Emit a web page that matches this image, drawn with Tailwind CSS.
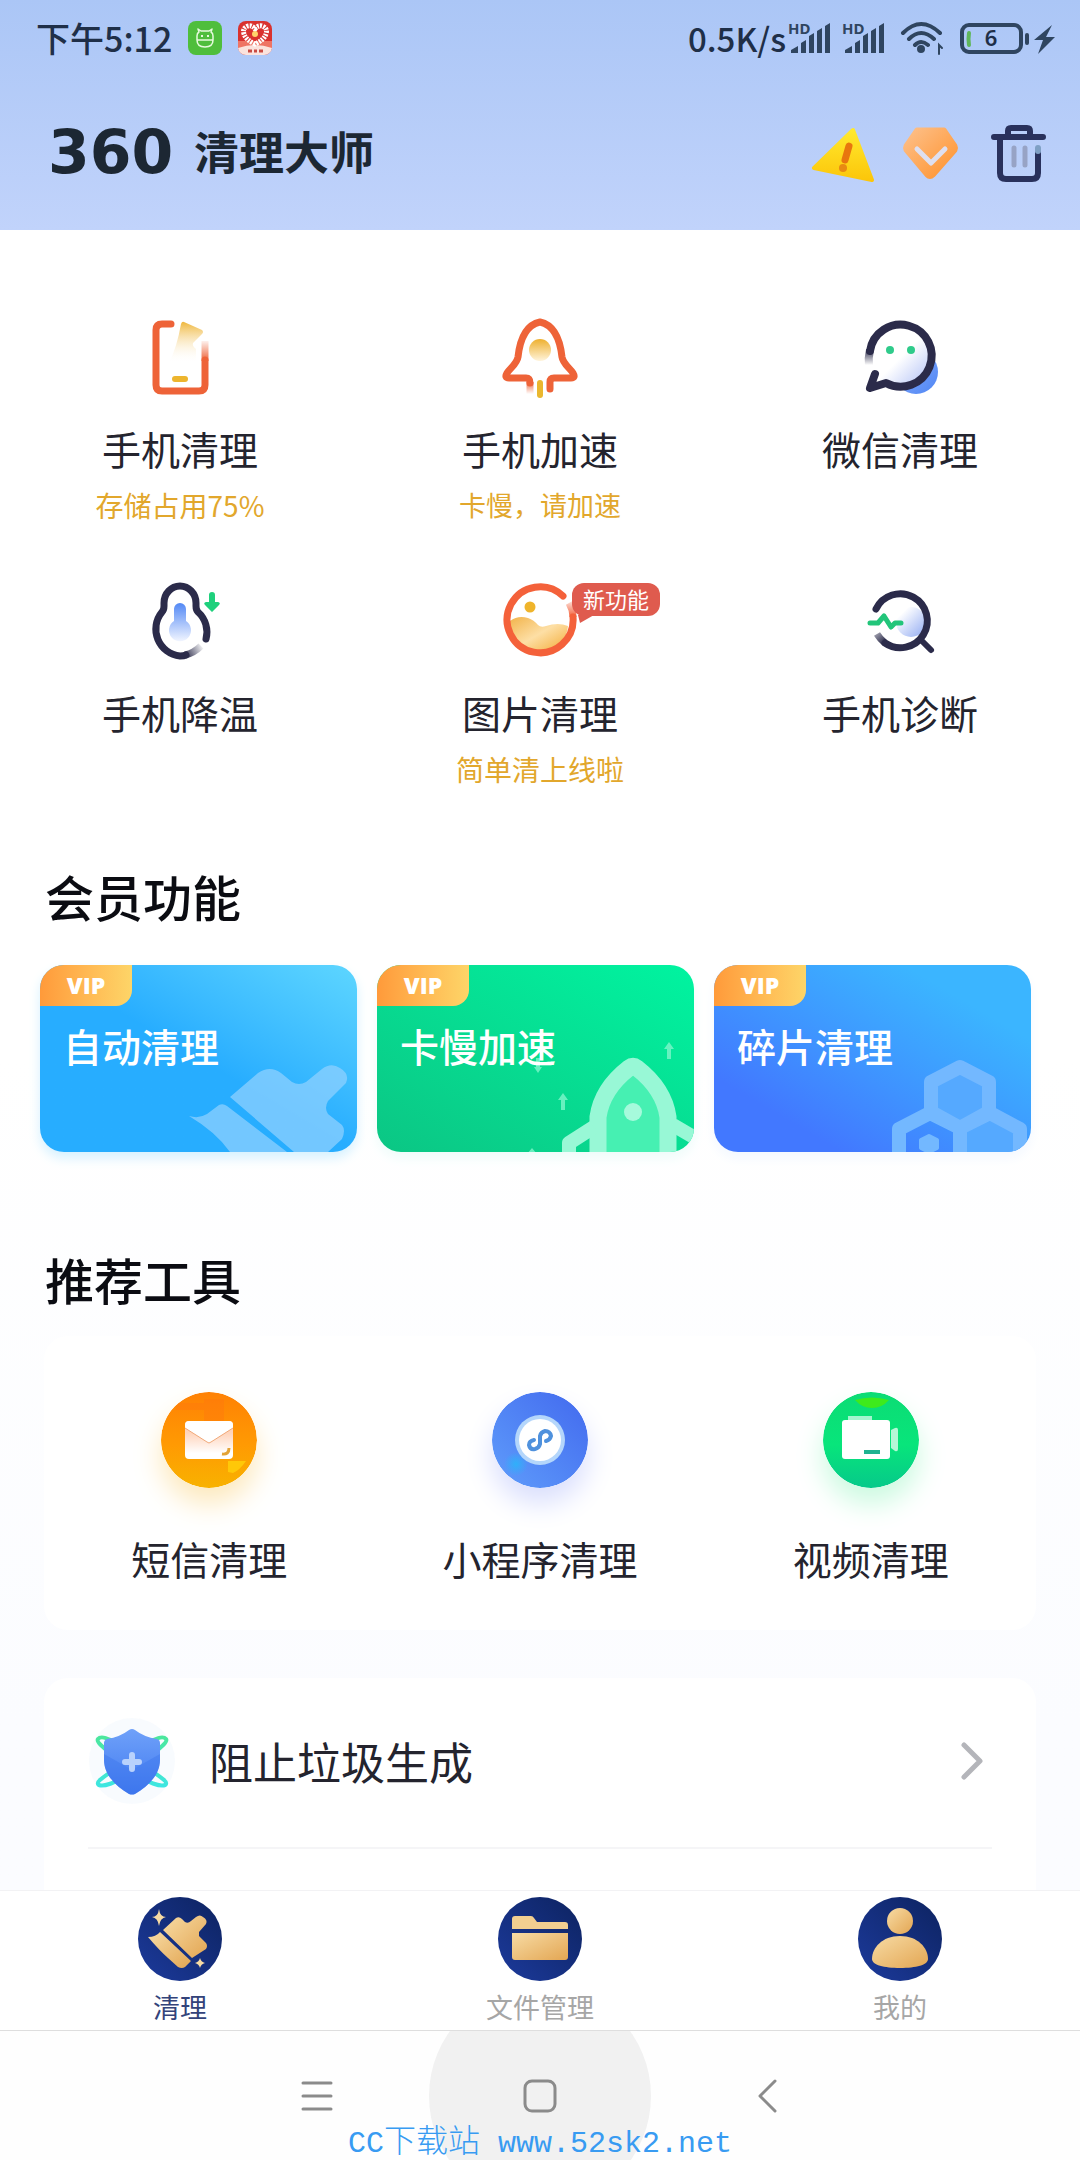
<!DOCTYPE html>
<html lang="zh-CN">
<head>
    <meta charset="UTF-8">
    <meta name="viewport" content="width=device-width, initial-scale=1.0">
    <title>360清理大师</title>
    <!-- TailwindCSS -->
    <script src="https://cdn.jsdelivr.net/npm/@tailwindcss/browser@4"></script>
</head>
<body class="flex h-screen flex-col overflow-hidden bg-white font-['Noto_Sans_CJK_SC',sans-serif] text-[#24242e]">

    <!-- 顶部区域 -->
    <header class="shrink-0 bg-linear-to-b from-[#abc6f6] to-[#c1d3fb]">
        <!-- 状态栏 -->
        <div class="flex h-[76px] items-center justify-between pr-6 pl-9 text-[#1f2f48]">
            <div class="flex items-center">
                <span class="text-[34px] leading-10 font-medium">下午5:12</span>
                <svg class="ml-4 size-[34px]" viewBox="0 0 34 34" fill="none">
                    <rect width="34" height="34" rx="8" fill="#4fbe3c"/>
                    <path d="M9 19v-4q0-3 2-4l-1-3 3 2h8l3-2-1 3q2 1 2 4v4q0 7-8 7t-8-7zm0 0h16" stroke="#e6fadd" stroke-width="1.5" stroke-linejoin="round"/>
                    <path d="M14 14v2M20 14v2" stroke="#e6fadd" stroke-width="2"/>
                </svg>
                <svg class="ml-4 size-[34px]" viewBox="0 0 34 34">
                    <rect width="34" height="34" rx="8" fill="#d9322f"/>
                    <path d="M0 20h34v7H0z" fill="#ee7464"/>
                    <path d="M0 27q17-6 34 0a8 8 0 0 1-8 7H8a8 8 0 0 1-8-7z" fill="#fbe3dd"/>
                    <path d="M17 8q3-4 7-3 6 2 4 8-2 6-11 10Q8 19 6 13 4 7 10 5q4-1 7 3z" fill="none" stroke="#fff" stroke-width="5" stroke-dasharray="2 1"/>
                    <circle cx="17" cy="13" r="3" fill="#ffd46b"/>
                    <path d="M10 30h4M16 30h3M21 30h4" stroke="#c94a42" stroke-width="3"/>
                </svg>
            </div>
            <div class="flex items-center">
                <span class="text-[33px] leading-10 font-medium">0.5K/s</span>
                <svg class="ml-1 h-8 w-[42px] overflow-visible" viewBox="0 0 42 32" fill="#2f4560">
                    <text x="-2" y="12" font-size="15" font-weight="700" font-family="Noto Sans">HD</text>
                    <path d="M1 31v-3l7-4v7zM11 31V21l5-3v13zM19 31V14l5-3v20zM27 31V9l5-3v25zM35 31V4l5-3v30z"/>
                </svg>
                <svg class="ml-3 h-8 w-[42px] overflow-visible" viewBox="0 0 42 32" fill="#2f4560">
                    <text x="-2" y="12" font-size="15" font-weight="700" font-family="Noto Sans">HD</text>
                    <path d="M1 31v-3l7-4v7zM11 31V21l5-3v13zM19 31V14l5-3v20zM27 31V9l5-3v25zM35 31V4l5-3v30z"/>
                </svg>
                <svg class="ml-3.5 h-[34px] w-11" viewBox="0 0 44 34" fill="none" stroke="#2f4560" stroke-width="4" stroke-linecap="round">
                    <path d="M3 12q18-18 37 0M9 18q12-12 25 0M15 24q6-6 13 0"/>
                    <circle cx="21" cy="28" r="2"/>
                    <path d="M39 33v-9l3 3" stroke-width="2"/>
                </svg>
                <svg class="ml-4 h-[34px] w-24" viewBox="0 0 96 34" fill="none">
                    <rect x="2" y="4" width="59" height="27" rx="7" stroke="#2f4560" stroke-width="4"/>
                    <path d="M9 12q-1 6 0 12" stroke="#5fb65a" stroke-width="4" stroke-linecap="round"/>
                    <path d="M67 14v8" stroke="#2f4560" stroke-width="4" stroke-linecap="round"/>
                    <path d="M92 4 74 19h9l-5 14 17-17h-9z" fill="#2f4560"/>
                    <text x="31" y="25" text-anchor="middle" font-size="22" font-weight="600" font-family="Noto Sans" fill="#1f2f48">6</text>
                </svg>
            </div>
        </div>

        <!-- 标题栏 -->
        <div class="flex h-[154px] items-start justify-between pt-11 pr-8 pl-12">
            <h1 class="flex h-16 items-center leading-none text-[#1c2733]">
                <span class="w-[146px] font-['DejaVu_Sans',sans-serif] text-[60px] font-bold">360</span>
                <span class="pb-1 text-[45px] font-bold">清理大师</span>
            </h1>
            <div class="flex h-16 items-center gap-6">
                <button type="button" aria-label="警告">
                    <svg class="h-[60px] w-[68px]" viewBox="0 0 68 60">
                        <defs>
                            <linearGradient id="warn" x1="0" y1="0" x2="0" y2="1"><stop stop-color="#ffe92e"/><stop offset="1" stop-color="#fcc60a"/></linearGradient>
                        </defs>
                        <path d="M45 8 6 46l58 12z" fill="url(#warn)" stroke="url(#warn)" stroke-width="4" stroke-linejoin="round"/>
                        <path d="m41 24-4 14" stroke="#e8760e" stroke-width="7" stroke-linecap="round"/>
                        <circle cx="35" cy="46" r="4" fill="#e88a12"/>
                    </svg>
                </button>
                <button type="button" aria-label="会员">
                    <svg class="h-[60px] w-[60px]" viewBox="0 0 60 60">
                        <defs>
                            <linearGradient id="gem" x1="0" y1="0" x2="1" y2="1"><stop stop-color="#fdc08a"/><stop offset="1" stop-color="#ff922c"/></linearGradient>
                        </defs>
                        <path d="M17 8h27l11 16q1 2 0 4L33 53q-3 3-6 0L6 28q-1-2 0-4z" fill="url(#gem)" stroke="url(#gem)" stroke-width="5" stroke-linejoin="round"/>
                        <path d="m17 27 14 14 14-14" fill="none" stroke="#dedff0" stroke-width="5" stroke-linecap="round" stroke-linejoin="round"/>
                    </svg>
                </button>
                <button type="button" aria-label="回收站" class="ml-1">
                    <svg class="h-[60px] w-[60px]" viewBox="0 0 60 60" fill="none" stroke="#29315c" stroke-width="6" stroke-linecap="round" stroke-linejoin="round">
                        <path d="M6 15h49M20 14V9q0-3 3-3h16q3 0 3 3v5M12 17v34q0 6 6 6h26q6 0 6-6V31"/>
                        <path d="M50 29v-3" stroke="#7fa0c4"/>
                        <path d="M26 26v17M37 26v17" stroke="#97a3c5" stroke-width="5"/>
                    </svg>
                </button>
            </div>
        </div>
    </header>

    <main class="min-h-0 flex-1 overflow-hidden bg-linear-to-b from-white from-50% to-[#fbfcff] to-90%">
        <!-- 功能宫格 -->
        <section class="grid grid-cols-3 items-start gap-y-14 pt-[85px]">
            <button type="button" class="flex h-[208px] flex-col items-center">
                <svg class="size-[84px]" viewBox="0 0 84 84" fill="none">
                    <defs>
                        <linearGradient id="broom" x1="0" y1="0" x2="0" y2="1"><stop stop-color="#efb73c"/><stop offset="1" stop-color="#fff" stop-opacity="0"/></linearGradient>
                        <linearGradient id="edge" x1="0" y1="24" x2="0" y2="46" gradientUnits="userSpaceOnUse"><stop stop-color="#ee6338" stop-opacity="0"/><stop offset="1" stop-color="#ee6338"/></linearGradient>
                    </defs>
                    <path d="M33 9h-9q-6 0-6 6v55q0 6 6 6h37q6 0 6-6V45" stroke="#ee6338" stroke-width="7" stroke-linecap="round"/>
                    <path d="M63.500 26h7v20h-7z" fill="url(#edge)"/>
                    <path d="M46 7l18 8q2 2 0 4l-9 9q-1 3 3 6v14H31q8-16 12-39 1-3 3-2z" fill="url(#broom)"/>
                    <path d="M37 64h10" stroke="#edb52e" stroke-width="6" stroke-linecap="round"/>
                </svg>
                <span class="mt-[21px] text-[39px] leading-14">手机清理</span>
                <span class="mt-[11px] text-[28px] leading-9 text-[#e2a72c]">存储占用75%</span>
            </button>
            <button type="button" class="flex h-[208px] flex-col items-center">
                <svg class="size-[84px]" viewBox="0 0 84 84" fill="none">
                    <defs>
                        <linearGradient id="port" x1="0" y1="0" x2="0" y2="1"><stop stop-color="#eeb02e"/><stop offset="1" stop-color="#fff4dc"/></linearGradient>
                        <linearGradient id="flame" x1="0" y1="66" x2="0" y2="79" gradientUnits="userSpaceOnUse"><stop stop-color="#ee6338"/><stop offset="1" stop-color="#ee6338" stop-opacity="0"/></linearGradient>
                    </defs>
                    <path d="M32 68q0-5-4-5H11q-5 0-2-5c3-5 10-9 11-16C22 24 28 10 42 7c14 3 20 17 22 35 1 7 8 11 11 16q3 5-2 5H56q-4 0-4 4v7" stroke="#ee6338" stroke-width="7" stroke-linecap="round" stroke-linejoin="round"/>
                    <path d="M28.500 67h7v12h-7z" fill="url(#flame)"/>
                    <circle cx="42" cy="35" r="11" fill="url(#port)"/>
                    <path d="M42 68v12" stroke="#eab72e" stroke-width="6" stroke-linecap="round"/>
                </svg>
                <span class="mt-[21px] text-[39px] leading-14">手机加速</span>
                <span class="mt-[11px] text-[27px] leading-9 text-[#e2a72c]">卡慢，请加速</span>
            </button>
            <button type="button" class="flex h-[208px] flex-col items-center">
                <svg class="size-[84px]" viewBox="0 0 84 84" fill="none">
                    <defs>
                        <linearGradient id="chat" x1="0" y1="0" x2="1" y2="1"><stop offset=".5" stop-color="#fff"/><stop offset="1" stop-color="#a9baf5"/></linearGradient>
                        <linearGradient id="moon" x1="0" y1="0" x2="1" y2="1"><stop stop-color="#8fb0fa"/><stop offset="1" stop-color="#4f86f5"/></linearGradient>
                        <linearGradient id="fade" x1="0" y1="34" x2="0" y2="50" gradientUnits="userSpaceOnUse"><stop stop-color="#2b2b4a"/><stop offset="1" stop-color="#2b2b4a" stop-opacity="0"/></linearGradient>
                    </defs>
                    <circle cx="58" cy="57" r="22" fill="url(#moon)"/>
                    <circle cx="42" cy="43" r="31" fill="url(#chat)"/>
                    <path d="M17 59l-5 14 16-5A31 31 0 1 0 12 36" stroke="#2b2b4a" stroke-width="8" stroke-linecap="round" stroke-linejoin="round"/>
                    <path d="M12 35q-2 8-1 16" stroke="url(#fade)" stroke-width="8"/>
                    <circle cx="32" cy="35" r="4" fill="#2fcb8b"/>
                    <circle cx="53" cy="35" r="4" fill="#2fcb8b"/>
                </svg>
                <span class="mt-[21px] text-[39px] leading-14">微信清理</span>
            </button>
            <button type="button" class="flex h-[208px] flex-col items-center">
                <svg class="size-[84px]" viewBox="0 0 84 84" fill="none">
                    <defs>
                        <linearGradient id="thermo" x1="0" y1="0" x2="0" y2="1"><stop stop-color="#5288f5"/><stop offset="1" stop-color="#f1f5ff"/></linearGradient>
                        <linearGradient id="tail" x1="46" y1="76" x2="65" y2="66" gradientUnits="userSpaceOnUse"><stop stop-color="#2b2b4a"/><stop offset="1" stop-color="#2b2b4a" stop-opacity="0"/></linearGradient>
                    </defs>
                    <path d="M68 60a27 27 0 0 0-8-27q-2-2-2-6v-3a16 17 0 0 0-32 0v3q0 4-2 6a27 27 0 0 0 18 44q4 0 6-1" stroke="#2b2b4a" stroke-width="7" stroke-linecap="round" stroke-linejoin="round"/>
                    <path d="M47 76q9-2 16-9" stroke="url(#tail)" stroke-width="7"/>
                    <path d="M36 30a6 6 0 0 1 12 0v12a11 11 0 1 1-12 0z" fill="url(#thermo)"/>
                    <path d="M71 16q0-3 3-3t3 3v7h3q3 1 1 3l-7 7-7-7q-2-2 1-3h3z" fill="#1fd07c"/>
                </svg>
                <span class="mt-[21px] text-[39px] leading-14">手机降温</span>
            </button>
            <button type="button" class="relative flex h-[208px] flex-col items-center">
                <svg class="size-[84px]" viewBox="0 0 84 84" fill="none">
                    <defs>
                        <linearGradient id="hill" x1="0" y1="0" x2="1" y2="1"><stop stop-color="#f2b34a"/><stop offset=".5" stop-color="#fddfa5"/><stop offset="1" stop-color="#f3ab35"/></linearGradient>
                        <linearGradient id="ring" x1="0" y1="20" x2="0" y2="38" gradientUnits="userSpaceOnUse"><stop stop-color="#f4613a" stop-opacity=".1"/><stop offset="1" stop-color="#f4613a"/></linearGradient>
                    </defs>
                    <path d="M12 42q8-6 18-3 6 2 10 7 3 3 8 1 12-4 22 0-2 22-28 25Q14 69 12 42z" fill="url(#hill)"/>
                    <path d="M65 17A33 33 0 1 0 75 38" stroke="#f4613a" stroke-width="7" stroke-linecap="round"/>
                    <path d="M71 24q4 7 4 14" stroke="url(#ring)" stroke-width="7"/>
                    <circle cx="32" cy="28" r="5.500" fill="#efb42b"/>
                </svg>
                <!-- 新功能角标 -->
                <span class="absolute top-1 left-1/2 ml-8 flex h-[33px] items-center rounded-xl bg-[#df5b4e] px-[11px] pb-1 text-[22px] leading-8 text-white">
                    新功能
                    <svg class="absolute top-8 left-1.5 h-2 w-4" viewBox="0 0 16 8" fill="#df5b4e"><path d="M0 0h16L2 8z"/></svg>
                </span>
                <span class="mt-[21px] text-[39px] leading-14">图片清理</span>
                <span class="mt-[11px] text-[28px] leading-9 text-[#e2a72c]">简单清上线啦</span>
            </button>
            <button type="button" class="flex h-[208px] flex-col items-center">
                <svg class="size-[84px]" viewBox="0 0 84 84" fill="none">
                    <defs>
                        <linearGradient id="lens" x1="0" y1="0" x2="1" y2="1"><stop offset=".2" stop-color="#fff"/><stop offset="1" stop-color="#8fa9f2"/></linearGradient>
                        <linearGradient id="lensend" x1="18" y1="50" x2="28" y2="62" gradientUnits="userSpaceOnUse"><stop stop-color="#2b2b4a" stop-opacity=".3"/><stop offset="1" stop-color="#2b2b4a"/></linearGradient>
                    </defs>
                    <circle cx="53" cy="43" r="15" fill="url(#lens)"/>
                    <path d="M18 30a27 27 0 1 1 9 34" stroke="#2b2b4a" stroke-width="7" stroke-linecap="round"/>
                    <path d="M19 55q3 5 8 9" stroke="url(#lensend)" stroke-width="7"/>
                    <path d="M63 61l10 10" stroke="#2b2b4a" stroke-width="6" stroke-linecap="round"/>
                    <path d="M12 44h8l6-7 7 11 4-4h6" stroke="#22c57a" stroke-width="5" stroke-linecap="round" stroke-linejoin="round"/>
                </svg>
                <span class="mt-[21px] text-[39px] leading-14">手机诊断</span>
            </button>
        </section>

        <!-- 会员功能 -->
        <section class="mt-[77px]">
            <h2 class="pl-[45px] text-[49px] leading-16 font-medium text-[#0b0c12]">会员功能</h2>
            <div class="mt-[37px] grid grid-cols-3 gap-5 pr-[49px] pl-10">
                <button type="button" class="relative flex h-[187px] flex-col items-start overflow-hidden rounded-3xl bg-linear-to-tr from-[#27adff] from-50% to-[#5dd6ff] text-white shadow-[0_6px_12px_#d5f1ff]">
                    <svg class="absolute right-0 bottom-0 h-[187px] w-[317px]" viewBox="0 0 317 187">
                        <g fill="#8dd0ff" fill-opacity=".75">
                            <path d="M149 151q10 3 18-2l12-9q4-2 8 1l60 46h-57q-14-20-41-36z"/>
                            <path d="M190 132l28-24q12-8 23 0l11 9q7 4 14 0l16-13q9-7 18-1 10 6 6 15l-18 18q-4 7 0 13l14 11q4 5 0 14l-14 13h-34z"/>
                        </g>
                    </svg>
                    <span class="flex h-[41px] w-[92px] items-center justify-center rounded-br-2xl bg-linear-to-r from-[#ff9a3a] to-[#fdd568] pb-px font-['Open_Sans',sans-serif] text-[23px] leading-8 font-extrabold">VIP</span>
                    <span class="relative mt-[11px] ml-[23px] text-[39px] leading-14 font-medium">自动清理</span>
                </button>
                <button type="button" class="relative flex h-[187px] flex-col items-start overflow-hidden rounded-3xl bg-linear-to-tr from-[#0bc684] to-[#00f4a0] text-white shadow-[0_6px_12px_#eefcfa]">
                    <svg class="absolute right-0 bottom-0 h-[187px] w-[317px]" viewBox="0 0 317 187" fill="none">
                        <path d="M221 190v-40q6-28 35-48 29 20 35 48v40z" fill="#46f0b2"/>
                        <path d="M221 190v-38q4-28 31-49 4-3 8 0 27 21 31 49v38" stroke="#98f8d6" stroke-width="17"/>
                        <path d="M192 190v-12l25-16M320 174l-24-14" stroke="#98f8d6" stroke-width="14" stroke-linejoin="round"/>
                        <circle cx="256" cy="147" r="9" fill="#a6fadc"/>
                        <path d="M292 77l5 7h-3v10h-4V84h-3zM186 128l5 7h-3v10h-4v-10h-3zM161 108l-4-6h2v-9h4v9h2zM155 183l5 6h-10z" fill="#7ff5cb" fill-opacity=".8"/>
                    </svg>
                    <span class="flex h-[41px] w-[92px] items-center justify-center rounded-br-2xl bg-linear-to-r from-[#ff9a3a] to-[#fdd568] pb-px font-['Open_Sans',sans-serif] text-[23px] leading-8 font-extrabold">VIP</span>
                    <span class="relative mt-[11px] ml-[23px] text-[39px] leading-14 font-medium">卡慢加速</span>
                </button>
                <button type="button" class="relative flex h-[187px] flex-col items-start overflow-hidden rounded-3xl bg-linear-to-tr from-[#4278ff] from-20% to-[#3bb5ff] to-80% text-white shadow-[0_6px_12px_#f3f8ff]">
                    <svg class="absolute right-0 bottom-0 h-[187px] w-[317px]" viewBox="0 0 317 187" fill="none">
                        <path d="M246 101l29 16v30l-29 16-29-16v-30zM246 163l30-15 30 16v26h-60z" fill="#55a9ff"/>
                        <path d="M185 192v-28l31-16 30 15 30-15 30 16v28M246 163v29M246 102l29 15v30l-29 16-29-16v-30z" stroke="#73b8ff" stroke-width="14" stroke-linejoin="round"/>
                        <path d="M215 171l8 4v8l-8 4-8-4v-8z" fill="#73b8ff" stroke="#73b8ff" stroke-width="4" stroke-linejoin="round"/>
                    </svg>
                    <span class="flex h-[41px] w-[92px] items-center justify-center rounded-br-2xl bg-linear-to-r from-[#ff9a3a] to-[#fdd568] pb-px font-['Open_Sans',sans-serif] text-[23px] leading-8 font-extrabold">VIP</span>
                    <span class="relative mt-[11px] ml-[23px] text-[39px] leading-14 font-medium">碎片清理</span>
                </button>
            </div>
        </section>

        <!-- 推荐工具 -->
        <section class="mt-[95px]">
            <h2 class="pl-[45px] text-[49px] leading-16 font-medium text-[#0b0c12]">推荐工具</h2>
            <div class="mx-11 mt-[25px] grid grid-cols-3 rounded-3xl bg-white pt-14 pb-11">
                <button type="button" class="flex flex-col items-center">
                    <svg class="size-24 rounded-full shadow-[0_16px_28px_#fde9bd]" viewBox="0 0 96 96">
                        <defs>
                            <linearGradient id="mail" x1="0" y1="0" x2="0" y2="1"><stop stop-color="#ff8104"/><stop offset=".55" stop-color="#ff9a03"/><stop offset="1" stop-color="#f8b200"/></linearGradient>
                            <linearGradient id="paper" x1="0" y1="0" x2="0" y2="1"><stop offset=".3" stop-color="#ffd3ba"/><stop offset=".85" stop-color="#fff"/></linearGradient>
                        </defs>
                        <circle cx="48" cy="48" r="48" fill="url(#mail)"/>
                        <path d="M17 11h26v7H14zM43 7h20v22H43z" fill="#ff7410" fill-opacity=".35"/>
                        <path d="M67 69h18q-6 9-13 12l-5-1z" fill="#ffc808"/>
                        <rect x="24" y="29" width="48" height="38" rx="4" fill="url(#paper)"/>
                        <path d="M24 36v-3q0-4 4-4h40q4 0 4 4v3L50 50q-2 2-4 0z" fill="#fff"/>
                        <path d="M24 36l22 14q2 2 4 0l22-14" fill="none" stroke="#f0a878" stroke-width="1"/>
                        <path d="M61 62q7 1 7-6" fill="none" stroke="#e3a336" stroke-width="3"/>
                    </svg>
                    <span class="mt-[42px] text-[39px] leading-14">短信清理</span>
                </button>
                <button type="button" class="flex flex-col items-center">
                    <svg class="size-24 rounded-full shadow-[0_16px_28px_#dadffd]" viewBox="0 0 96 96" fill="none">
                        <defs>
                            <linearGradient id="mini" x1="1" y1="0" x2="0" y2="1"><stop stop-color="#4269ee"/><stop offset="1" stop-color="#5f9dfb"/></linearGradient>
                            <radialGradient id="glow"><stop stop-color="#2fb0fa"/><stop offset="1" stop-color="#2fb0fa" stop-opacity="0"/></radialGradient>
                        </defs>
                        <circle cx="48" cy="48" r="48" fill="url(#mini)"/>
                        <circle cx="24" cy="72" r="12" fill="url(#glow)"/>
                        <circle cx="48" cy="48" r="25" fill="#b4d6fb"/>
                        <circle cx="48" cy="48" r="21" fill="#fff"/>
                        <path d="M42 48q-5 1-5 5 1 5 6 4 4-1 5-5v-8q1-4 5-5 5 0 6 5-1 4-5 5" stroke="#4f91dd" stroke-width="4" stroke-linecap="round"/>
                    </svg>
                    <span class="mt-[42px] text-[39px] leading-14">小程序清理</span>
                </button>
                <button type="button" class="flex flex-col items-center">
                    <svg class="size-24 rounded-full shadow-[0_16px_28px_#cbfae0]" viewBox="0 0 96 96">
                        <defs>
                            <linearGradient id="video" x1="0" y1="0" x2="0" y2="1"><stop stop-color="#0cdc74"/><stop offset=".55" stop-color="#08e57b"/><stop offset="1" stop-color="#06c98a"/></linearGradient>
                        </defs>
                        <circle cx="48" cy="48" r="48" fill="url(#video)"/>
                        <path d="M32 8q17-5 34 0-7 8-17 8T32 8z" fill="#3eea1c"/>
                        <path d="M25 24h24v5H25z" fill="#a5f5cf"/>
                        <rect x="19" y="28" width="48" height="39" rx="3" fill="#fff"/>
                        <path d="M68 38l4-2q3-1 3 2v19q0 3-3 2l-4-3z" fill="#b5f7d6"/>
                        <path d="M41 58h16v4H41z" fill="#1fb391"/>
                    </svg>
                    <span class="mt-[42px] text-[39px] leading-14">视频清理</span>
                </button>
            </div>
        </section>

        <!-- 列表 -->
        <section class="mx-11 mt-12 h-80 rounded-t-3xl bg-white">
            <a href="#" class="mx-11 flex h-[171px] items-center border-b-2 border-[#f5f5f7] pb-1">
                <svg class="size-[88px]" viewBox="0 0 88 88" fill="none">
                    <defs>
                        <linearGradient id="shield" x1="0" y1="0" x2="0" y2="1"><stop stop-color="#6fa1f9"/><stop offset="1" stop-color="#4079f0"/></linearGradient>
                        <linearGradient id="orbit" x1="0" y1="18" x2="0" y2="70" gradientUnits="userSpaceOnUse"><stop stop-color="#4be79a"/><stop offset="1" stop-color="#3ee6e2"/></linearGradient>
                    </defs>
                    <circle cx="44" cy="44" r="43" fill="#f3f8fd" fill-opacity=".6"/>
                    <path d="M10 22c4-5 18 2 36 18s34 23 32 27-20 0-38-16S7 26 10 22z" stroke="url(#orbit)" stroke-width="4"/>
                    <path d="M78 22c-4-5-18 2-36 18S8 63 10 67s20 0 38-16 33-25 30-29z" stroke="url(#orbit)" stroke-width="4"/>
                    <path d="M41 13q3-2 6 0 9 7 22 9 3 1 3 4v17c0 14-11 26-25 34q-3 1-6 0C27 69 16 57 16 43V26q0-3 3-4 13-2 22-9z" fill="url(#shield)"/>
                    <path d="M16 37l23 13q5 3 10 0l23-13v6c0 14-11 26-25 34q-3 1-6 0C27 69 16 57 16 43z" fill="#3a74ec" fill-opacity=".4"/>
                    <path d="M44 38v14M37 45h14" stroke="#b9d2fc" stroke-width="6" stroke-linecap="round"/>
                </svg>
                <span class="ml-[33px] flex-1 text-[44px] leading-16">阻止垃圾生成</span>
                <svg class="mr-2 h-10 w-6" viewBox="0 0 24 40" fill="none" stroke="#b4b5ba" stroke-width="5" stroke-linecap="round" stroke-linejoin="round"><path d="M4 4l16 16L4 36"/></svg>
            </a>
        </section>
    </main>

    <!-- 底部导航 -->
    <nav class="grid shrink-0 grid-cols-3 border-t border-b border-t-[#f2f2f4] border-b-[#dedede] bg-white pt-1.5 pb-[5px]">
        <a href="#" class="flex flex-col items-center text-[#33437a]">
            <svg class="size-[84px]" viewBox="0 0 84 84">
                <defs>
                    <linearGradient id="navy" x1="0" y1="1" x2="1" y2="0"><stop stop-color="#1c3a9c"/><stop offset="1" stop-color="#0d2360"/></linearGradient>
                    <linearGradient id="gold" x1="0" y1="0" x2="1" y2="1"><stop stop-color="#f7dba4"/><stop offset="1" stop-color="#e3a653"/></linearGradient>
                </defs>
                <circle cx="42" cy="42" r="42" fill="url(#navy)"/>
                <path d="M25 33l13-12q3-2 6 1l3 3q3 2 6-1l5-4q4-3 7 0 5 3 3 7l-7 8v4l7 7q2 3 0 6L54 61z" fill="url(#gold)"/>
                <path d="M10 40q8 0 12-5l31 29-6 6q-3 2-7 0L30 61q-9-8-20-21z" fill="url(#gold)"/>
                <path d="M21 12q1 8 7 8-6 1-7 9-1-8-7-9 6 0 7-8zM62 61q1 4 5 5-4 1-5 5-1-4-5-5 4-1 5-5z" fill="#f7dba4"/>
            </svg>
            <span class="mt-2 text-[27px] leading-9">清理</span>
        </a>
        <a href="#" class="flex flex-col items-center text-[#a6a6a6]">
            <svg class="size-[84px]" viewBox="0 0 84 84">
                <circle cx="42" cy="42" r="42" fill="url(#navy)"/>
                <path d="M14 32V22q0-3 3-3h16q2 0 3 2l3 4h28q3 0 3 3v4z" fill="#f2cf90"/>
                <path d="M14 36h56v24q0 3-3 3H17q-3 0-3-3z" fill="url(#gold)"/>
            </svg>
            <span class="mt-2 text-[27px] leading-9">文件管理</span>
        </a>
        <a href="#" class="flex flex-col items-center text-[#a6a6a6]">
            <svg class="size-[84px]" viewBox="0 0 84 84">
                <circle cx="42" cy="42" r="42" fill="url(#navy)"/>
                <circle cx="42" cy="24" r="13" fill="url(#gold)"/>
                <path d="M42 39c18 0 28 12 28 23 0 6-12 9-28 9s-28-3-28-9c0-11 10-23 28-23z" fill="url(#gold)"/>
            </svg>
            <span class="mt-2 text-[27px] leading-9">我的</span>
        </a>
    </nav>

    <!-- 系统导航键 -->
    <footer class="relative flex h-[129px] shrink-0 items-center justify-center overflow-hidden bg-[#fefefe]">
        <button type="button" aria-label="菜单">
            <svg class="size-9" viewBox="0 0 36 36" stroke="#8b8b8b" stroke-width="3" stroke-linecap="round"><path d="M3 5h28M3 18h28M3 31h28"/></svg>
        </button>
        <button type="button" aria-label="主页" class="mx-[93px] flex size-[222px] shrink-0 items-center justify-center rounded-full bg-[#f1f1f1]">
            <svg class="size-9" viewBox="0 0 36 36" fill="none" stroke="#8b8b8b" stroke-width="3"><rect x="3" y="3" width="30" height="30" rx="7"/></svg>
        </button>
        <button type="button" aria-label="返回">
            <svg class="size-9" viewBox="0 0 36 36" fill="none" stroke="#8b8b8b" stroke-width="3" stroke-linecap="round" stroke-linejoin="round"><path d="M31 3L16 18l15 15"/></svg>
        </button>
        <p class="absolute inset-x-0 bottom-0 text-center font-['Liberation_Mono','Noto_Sans_CJK_SC',monospace] text-[30px] leading-8 text-[#389bf2]">CC<span class="text-[32px] leading-8 font-light">下载站</span> www.52sk2.net</p>
    </footer>
</body>
</html>
